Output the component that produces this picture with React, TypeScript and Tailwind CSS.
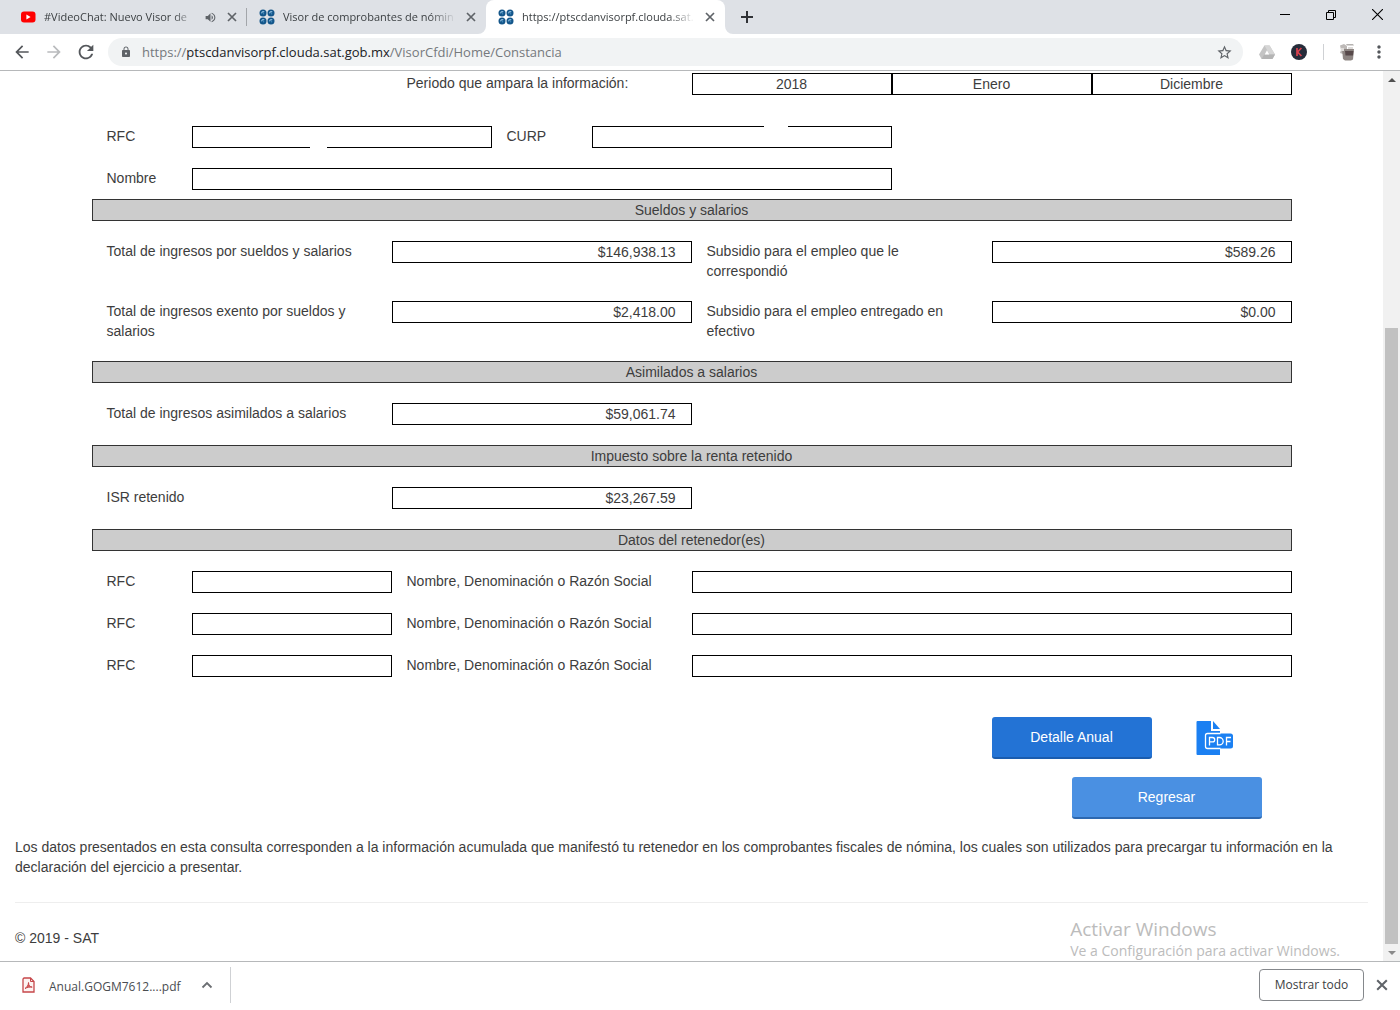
import { useState } from 'react';
import type { ReactNode } from 'react';
import { MdArrowBack, MdArrowForward, MdLock, MdMoreVert, MdRefresh, MdStarBorder, MdVolumeUp } from 'react-icons/md';

type Tab = {
  id: string;
  title: string;
  icon: 'youtube' | 'sat';
  playing?: boolean;
};

const tabs: Tab[] = [
  { id: 'video', title: '#VideoChat: Nuevo Visor de', icon: 'youtube', playing: true },
  { id: 'visor', title: 'Visor de comprobantes de nómin', icon: 'sat' },
  { id: 'constancia', title: 'https://ptscdanvisorpf.clouda.sat.', icon: 'sat' },
];

const retenedores = [1, 2, 3];

const CrossIcon = ({ className }: { className: string }) => (
  <svg viewBox="0 0 10 10" className={className}>
    <path d="M1 1l8 8M9 1L1 9" fill="none" stroke="currentColor" strokeWidth="1.700" />
  </svg>
);

const YoutubeIcon = () => (
  <svg viewBox="0 0 16 16" className="w-4 h-4 shrink-0">
    <rect x="1" y="2.500" width="14.500" height="11" rx="3" fill="#f00" />
    <path d="M6.400 5.500v5l4.200-2.500z" fill="#fff" />
  </svg>
);

const SatIcon = () => (
  <svg viewBox="0 0 16 16" className="w-4 h-4 shrink-0">
    {[4, 12].map((cx) =>
      [4, 12].map((cy) => (
        <g key={`${cx}-${cy}`}>
          <circle cx={cx} cy={cy} r="3.500" fill="#14568a" />
          <path d={`M${cx - 1.2} ${cy + 0.4}a1.400 1.400 0 0 1 2.400-1.300`} fill="none" stroke="#8fc0e2" strokeWidth="1.200" />
          <circle cx={cx + 0.6} cy={cy + 0.8} r="0.700" fill="#3f88bd" />
        </g>
      ))
    )}
  </svg>
);

const DriveIcon = () => (
  <svg viewBox="0 0 16 16" className="w-4 h-4">
    <path d="M5.400 1.500h5.200L16 10.500l-2.600 4.500H2.600L0 10.500z" fill="#c4c4c4" />
    <path d="M10.600 1.500 16 10.500h-5.200L5.400 1.500z" fill="#d6d6d6" />
    <path d="M2.600 15 5.200 10.500H16L13.400 15z" fill="#b4b4b4" />
    <path d="M8 6.300 10.300 10.500H5.700z" fill="#fff" />
  </svg>
);

const ExtensionIcon = () => (
  <svg viewBox="0 0 16 16" className="w-4 h-4">
    <circle cx="8" cy="8" r="8" fill="#262c3a" />
    <path d="M6 4v8M10.400 4 6.600 8l3.800 4" fill="none" stroke="#d8414f" strokeWidth="1.700" />
  </svg>
);

const ProfileIcon = () => (
  <svg viewBox="0 0 18 18" className="w-[18px] h-[18px]">
    <path d="M2 2.500 6 1l3 2v5l-4 3-3-1 1-3z" fill="#bdb9b7" />
    <path d="M8 1h7l1 1.500H9z" fill="#b5b2b0" />
    <path d="M4 6h12l-1 10.500-2 1H7l-2-1.500z" fill="#8d8582" />
    <path d="M7 8h8.500l-.5 4.500H7.500z" fill="#57494a" />
    <path d="M3 5h3v3H3zM10 4h5v2h-5z" fill="#dedbd9" />
  </svg>
);

const PdfIcon = () => (
  <svg viewBox="0 0 38 36" className="w-[38px] h-9">
    <path d="M1.500 1H15v10h9v24H1.500a1 1 0 0 1-1-1V2a1 1 0 0 1 1-1z" fill="#1b80f2" />
    <path d="M17 1v8h7z" fill="#1b80f2" />
    <rect x="9" y="13.500" width="28" height="15" rx="2.500" fill="#1b80f2" />
    <path d="M24.500 13.500H11.500a2 2 0 0 0-2 2v11a2 2 0 0 0 2 2h13" fill="none" stroke="#fff" strokeWidth="1.300" />
    <path
      d="M13.500 25.500v-8h3a2.200 2.200 0 0 1 0 4.400h-3M21.500 17.500h2a3.600 3.600 0 0 1 0 7.400h-2zM30.500 25.500v-8H35M30.500 21.500h4"
      fill="none"
      stroke="#fff"
      strokeWidth="1.300"
    />
  </svg>
);

const AcrobatIcon = () => (
  <svg viewBox="0 0 13 16" className="w-[13px] h-4">
    <path d="M2 1h6.500L12 4.500V15H1V2z" fill="#fdf3f2" stroke="#c6474a" strokeWidth="1.300" />
    <path d="M8.500 1v3.500H12" fill="none" stroke="#c6474a" />
    <path d="M3 11.500c2-1.200 3.500-3.500 3.500-6 0 3 1.500 4.500 3.700 4.600-2.700-.2-5.200.3-7.200 1.400z" fill="#d8605f" stroke="#c6474a" />
  </svg>
);

const TabStrip = () => {
  const [activeTab, setActiveTab] = useState('constancia');

  return (
    <div className="flex h-[34px] shrink-0 bg-[#dee1e6]">
      <div role="tablist" className="flex min-w-0 pl-2">
        {tabs.map((tab, index) => {
          const isActive = tab.id === activeTab;
          return (
            <div
              key={tab.id}
              className={`relative flex w-[239px] min-w-0 items-center pl-3 pr-[10px] ${isActive ? 'rounded-t-lg bg-white' : ''}`}
            >
              {isActive && (
                <>
                  <svg viewBox="0 0 8 8" className="absolute -left-2 bottom-0 w-2 h-2">
                    <path d="M8 0v8H0a8 8 0 0 0 8-8z" fill="#fff" />
                  </svg>
                  <svg viewBox="0 0 8 8" className="absolute -right-2 bottom-0 w-2 h-2">
                    <path d="M0 0v8h8a8 8 0 0 1-8-8z" fill="#fff" />
                  </svg>
                </>
              )}
              {tab.icon === 'youtube' ? <YoutubeIcon /> : <SatIcon />}
              <button
                role="tab"
                aria-selected={isActive}
                onClick={() => setActiveTab(tab.id)}
                className="ml-2 min-w-0 flex-1 overflow-hidden whitespace-nowrap text-left text-[11px] leading-4 text-[#3c4043] [mask-image:linear-gradient(to_right,#000_85%,transparent)]"
              >
                {tab.title}
              </button>
              {tab.playing && <MdVolumeUp className="ml-2 w-[13px] h-[13px] shrink-0 text-[#5f6368]" />}
              <button aria-label="Cerrar pestaña" className="ml-[10px] shrink-0 text-[#5f6368]">
                <CrossIcon className="w-[10px] h-[10px]" />
              </button>
              {index === 0 && <span className="absolute right-0 top-2 h-[18px] w-px bg-[#a3a6aa]" />}
            </div>
          );
        })}
      </div>
      <button aria-label="Nueva pestaña" className="ml-4 flex items-center text-[#303236]">
        <svg viewBox="0 0 12 12" className="w-3 h-3">
          <path d="M6 0v12M0 6h12" stroke="currentColor" strokeWidth="2" />
        </svg>
      </button>

      {/* Window controls */}
      <div className="ml-auto flex h-[29px] text-black">
        <button aria-label="Minimizar" className="flex w-[46px] items-center justify-center">
          <svg viewBox="0 0 10 10" className="w-[10px] h-[10px]">
            <path d="M0 4.500h10" stroke="currentColor" />
          </svg>
        </button>
        <button aria-label="Restaurar" className="flex w-[46px] items-center justify-center">
          <svg viewBox="0 0 10 10" className="w-[10px] h-[10px]" fill="none" stroke="currentColor">
            <path d="M.5 2.500h7v7h-7zM2.500 2.500v-2h7v7h-2" />
          </svg>
        </button>
        <button aria-label="Cerrar" className="flex w-[46px] items-center justify-center">
          <svg viewBox="0 0 10 10" className="w-[11px] h-[11px]">
            <path d="M0 0l10 10M10 0L0 10" stroke="currentColor" />
          </svg>
        </button>
      </div>
    </div>
  );
};

const ToolButton = ({ label, children }: { label: string; children: ReactNode }) => (
  <button aria-label={label} className="flex w-8 shrink-0 items-center justify-center text-[#54575b]">
    {children}
  </button>
);

const Toolbar = () => (
  <div className="flex h-[37px] shrink-0 border-b border-[#b6b8ba] bg-white pl-[6px] pr-[5px]">
    <ToolButton label="Atrás">
      <MdArrowBack className="w-5 h-5" />
    </ToolButton>
    <ToolButton label="Adelante">
      <MdArrowForward className="w-5 h-5 text-[#b9bbbd]" />
    </ToolButton>
    <ToolButton label="Recargar">
      <MdRefresh className="w-[22px] h-[22px]" />
    </ToolButton>

    {/* Address bar */}
    <div className="ml-[6px] mr-2 my-1 flex min-w-0 flex-1 items-center rounded-full bg-[#f1f3f4] pl-3 pr-[10px]">
      <MdLock className="w-3 h-[14px] shrink-0 text-[#5f6368]" />
      <a href="#" className="ml-[10px] min-w-0 flex-1 truncate text-[13px] leading-5 text-[#75797d]">
        https://<span className="text-[#202124]">ptscdanvisorpf.clouda.sat.gob.mx</span>/VisorCfdi/Home/Constancia
      </a>
      <button aria-label="Agregar a favoritos" className="text-[#5f6368]">
        <MdStarBorder className="w-[17px] h-[17px]" />
      </button>
    </div>

    <ToolButton label="Google Drive">
      <DriveIcon />
    </ToolButton>
    <ToolButton label="Extensión">
      <ExtensionIcon />
    </ToolButton>
    <div className="flex w-4 items-center justify-center">
      <span className="h-4 w-px bg-[#cfd1d4]" />
    </div>
    <ToolButton label="Perfil">
      <ProfileIcon />
    </ToolButton>
    <ToolButton label="Menú">
      <MdMoreVert className="w-5 h-5" />
    </ToolButton>
  </div>
);

const fieldClass = 'block h-[22px] w-full border border-black bg-white px-[15px] text-[14px] leading-5 text-[#3d3d3d]';

const SectionTitle = ({ children }: { children: ReactNode }) => (
  <h2 className="border border-[#333] bg-[#ccc] text-center">{children}</h2>
);

const Row = ({ children }: { children: ReactNode }) => <div className="grid grid-cols-12 items-start">{children}</div>;

type AmountProps = { id: string; label: string; value: string };

const Amount = ({ id, label, value }: AmountProps) => (
  <>
    <label htmlFor={id} className="col-span-3 px-[15px]">
      {label}
    </label>
    <div className="col-span-3">
      <input id={id} readOnly value={value} className={`${fieldClass} text-right`} />
    </div>
  </>
);

const Constancia = () => (
  <form className="mx-auto w-full max-w-[1200px]" onSubmit={(e) => e.preventDefault()}>
    <Row>
      <label htmlFor="ejercicio" className="col-span-3 col-start-4 px-[15px]">
        Periodo que ampara la información:
      </label>
      <div className="col-span-6 grid grid-cols-3">
        <input id="ejercicio" readOnly value="2018" className={`${fieldClass} text-center`} />
        <input aria-label="Mes inicial" readOnly value="Enero" className={`${fieldClass} text-center`} />
        <input aria-label="Mes final" readOnly value="Diciembre" className={`${fieldClass} text-center`} />
      </div>
    </Row>

    {/* Contribuyente */}
    <div className="mt-[31px] mb-[9px] space-y-5">
      <Row>
        <label htmlFor="rfc" className="px-[15px]">
          RFC
        </label>
        <div className="relative col-span-3">
          <input id="rfc" readOnly value="" className={fieldClass} />
          <span className="absolute bottom-0 left-[118px] h-px w-[17px] bg-white" />
        </div>
        <label htmlFor="curp" className="px-[15px]">
          CURP
        </label>
        <div className="relative col-span-3">
          <input id="curp" readOnly value="" className={fieldClass} />
          <span className="absolute left-[172px] top-0 h-px w-6 bg-white" />
        </div>
      </Row>
      <Row>
        <label htmlFor="nombre" className="pl-[15px]">
          Nombre
        </label>
        <div className="col-span-7">
          <input id="nombre" readOnly value="" className={fieldClass} />
        </div>
      </Row>
    </div>

    <div className="space-y-5">
      <SectionTitle>Sueldos y salarios</SectionTitle>
      <Row>
        <Amount id="sueldos" label="Total de ingresos por sueldos y salarios" value="$146,938.13" />
        <Amount id="subsidio" label="Subsidio para el empleo que le correspondió" value="$589.26" />
      </Row>
      <Row>
        <Amount id="exento" label="Total de ingresos exento por sueldos y salarios" value="$2,418.00" />
        <Amount id="entregado" label="Subsidio para el empleo entregado en efectivo" value="$0.00" />
      </Row>

      <SectionTitle>Asimilados a salarios</SectionTitle>
      <Row>
        <Amount id="asimilados" label="Total de ingresos asimilados a salarios" value="$59,061.74" />
      </Row>

      <SectionTitle>Impuesto sobre la renta retenido</SectionTitle>
      <Row>
        <Amount id="isr" label="ISR retenido" value="$23,267.59" />
      </Row>

      <SectionTitle>Datos del retenedor(es)</SectionTitle>
      {retenedores.map((n) => (
        <Row key={n}>
          <label htmlFor={`retenedor-rfc-${n}`} className="px-[15px]">
            RFC
          </label>
          <div className="col-span-2">
            <input id={`retenedor-rfc-${n}`} readOnly value="" className={fieldClass} />
          </div>
          <label htmlFor={`retenedor-nombre-${n}`} className="col-span-3 px-[15px]">
            Nombre, Denominación o Razón Social
          </label>
          <div className="col-span-6">
            <input id={`retenedor-nombre-${n}`} readOnly value="" className={fieldClass} />
          </div>
        </Row>
      ))}
    </div>

    {/* Acciones */}
    <div className="mt-10 flex items-center justify-end pr-[58px]">
      <button className="h-[42px] w-40 rounded-[3px] border-b-2 border-[#1a5cae] bg-[#2373d5] text-white">
        Detalle Anual
      </button>
      <button aria-label="Descargar PDF" className="ml-11">
        <PdfIcon />
      </button>
    </div>
    <div className="mt-[18px] flex justify-end pr-[30px]">
      <button className="h-[42px] w-[190px] rounded-[3px] border-b-2 border-[#2d68b0] bg-[#4a90e2] text-white">
        Regresar
      </button>
    </div>
  </form>
);

const Scrollbar = () => (
  <div className="flex w-[17px] shrink-0 flex-col items-center bg-[#f1f1f1]">
    <div className="flex h-[17px] items-center">
      <svg viewBox="0 0 8 4" className="w-2 h-1">
        <path d="M0 4l4-4 4 4z" fill="#505050" />
      </svg>
    </div>
    <div className="flex w-[13px] flex-1 flex-col">
      <div className="basis-[28%]" />
      <div className="flex-1 bg-[#c1c1c1]" />
    </div>
    <div className="flex h-[17px] items-center">
      <svg viewBox="0 0 8 4" className="w-2 h-1">
        <path d="M0 0l4 4 4-4z" fill="#8a8a8a" />
      </svg>
    </div>
  </div>
);

const DownloadBar = () => (
  <div className="flex h-[49px] shrink-0 items-center border-t border-[#b6b8ba] bg-white pb-0.5 pr-3">
    <div className="flex h-9 items-center border-r border-[#cfd1d4] pl-[22px] pr-[17px] text-[#4a4d51]">
      <AcrobatIcon />
      <a href="#" className="ml-[14px] pt-1 text-[12px] leading-5">
        Anual.GOGM7612....pdf
      </a>
      <button aria-label="Más opciones" className="ml-5">
        <svg viewBox="0 0 12 8" className="w-3 h-2">
          <path d="M1.500 6.500 6 2l4.500 4.500" fill="none" stroke="#6b6e72" strokeWidth="1.800" />
        </svg>
      </button>
    </div>
    <button className="ml-auto h-8 w-[105px] rounded border border-[#85888c] text-[12px] font-medium text-[#3c4043]">
      Mostrar todo
    </button>
    <button aria-label="Cerrar descargas" className="ml-3 text-[#5f6368]">
      <CrossIcon className="w-3 h-3" />
    </button>
  </div>
);

export default function App() {
  return (
    <div className="flex h-screen flex-col overflow-hidden bg-white font-['Open_Sans','Noto_Sans',sans-serif]">
      <TabStrip />
      <Toolbar />
      <div className="relative flex min-h-0 flex-1">
        <main className="min-w-0 flex-1 overflow-hidden pt-0.5 font-['Liberation_Sans',Arial,sans-serif] text-[14px] leading-5 text-[#3d3d3d]">
          <Constancia />
          <div className="px-[15px]">
            <p className="mt-[18px]">
              Los datos presentados en esta consulta corresponden a la información acumulada que manifestó tu retenedor
              en los comprobantes fiscales de nómina, los cuales son utilizados para precargar tu información en la
              declaración del ejercicio a presentar.
            </p>
            <hr className="mt-[25px] mb-[25px] border-[#eee]" />
            <footer>© 2019 - SAT</footer>
          </div>
        </main>
        <Scrollbar />

        {/* Windows activation notice */}
        <div className="pointer-events-none absolute bottom-0 right-[60px] text-[#bcbcbc]">
          <p className="text-[19px] leading-6">Activar Windows</p>
          <p className="text-[14px] leading-5">Ve a Configuración para activar Windows.</p>
        </div>
      </div>
      <DownloadBar />
    </div>
  );
}
